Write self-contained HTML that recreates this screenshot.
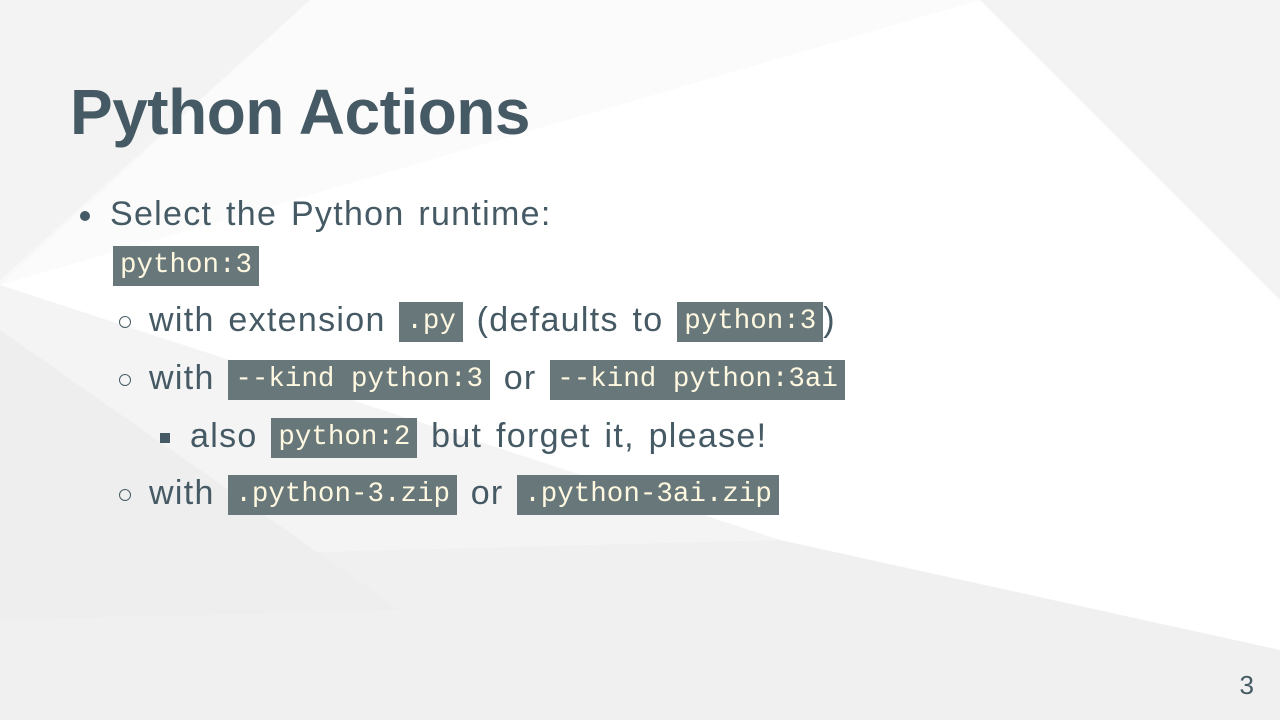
<!DOCTYPE html>
<html><head><meta charset="utf-8"><style>
body{margin:0;width:1280px;height:720px;overflow:hidden;position:relative;font-family:"Liberation Sans",sans-serif;color:#455a64;background:#f7f7f7}
svg.bg{position:absolute;left:0;top:0}
.t{position:absolute;white-space:nowrap;font-size:34px;line-height:40px;letter-spacing:1.3px;word-spacing:3px}
h1{position:absolute;left:70px;top:72px;margin:0;font-size:64px;font-weight:bold;line-height:80px;letter-spacing:-0.5px}
code{font-family:"Liberation Mono",monospace;font-size:27.5px;letter-spacing:0;word-spacing:0;background:#67777a;color:#fff8e1;padding:2px 7px;display:inline-block;line-height:36px;vertical-align:middle}
.dot{display:inline-block;width:10px;height:10px;border-radius:50%;background:#455a64;margin-right:20px;vertical-align:middle}
.circ{display:inline-block;width:12px;height:12px;border-radius:50%;border:1.5px solid #455a64;margin-right:18px;vertical-align:middle;box-sizing:border-box}
.sq{display:inline-block;width:10px;height:10px;background:#455a64;margin-right:20px;vertical-align:middle}
.n{position:absolute;right:26px;top:670px;font-size:26px}
</style></head><body>
<svg class="bg" width="1280" height="720">
<rect width="1280" height="720" fill="#f8f8f8"/>
<polygon points="0,0 310,0 0,280" fill="#f3f3f3"/>
<polygon points="310,0 980,0 0,285" fill="#fbfbfb"/>
<polygon points="980,0 1280,0 1280,300" fill="#f3f3f3"/>
<polygon points="0,285 980,0 1280,300 1280,650 780,540" fill="#ffffff"/>
<polygon points="0,285 780,540 0,560" fill="#f4f4f4"/>
<polygon points="0,560 780,540 1280,650 1280,720 0,720" fill="#f0f0f0"/>
<polygon points="0,330 400,610 0,620" fill="#eeeeee"/>
</svg>
<h1>Python Actions</h1>
<div class="t" style="left:80px;top:194px"><span class="dot"></span>Select the Python runtime:</div>
<div class="t" style="left:113px;top:244px"><code>python:3</code></div>
<div class="t" style="left:119px;top:300px"><span class="circ"></span>with extension <code>.py</code> (defaults to <code>python:3</code>)</div>
<div class="t" style="left:119px;top:358px"><span class="circ"></span>with <code>--kind python:3</code> or <code>--kind python:3ai</code></div>
<div class="t" style="left:160px;top:416px"><span class="sq"></span>also <code>python:2</code> but forget it, please!</div>
<div class="t" style="left:119px;top:473px"><span class="circ"></span>with <code>.python-3.zip</code> or <code>.python-3ai.zip</code></div>
<div class="n">3</div>
</body></html>
